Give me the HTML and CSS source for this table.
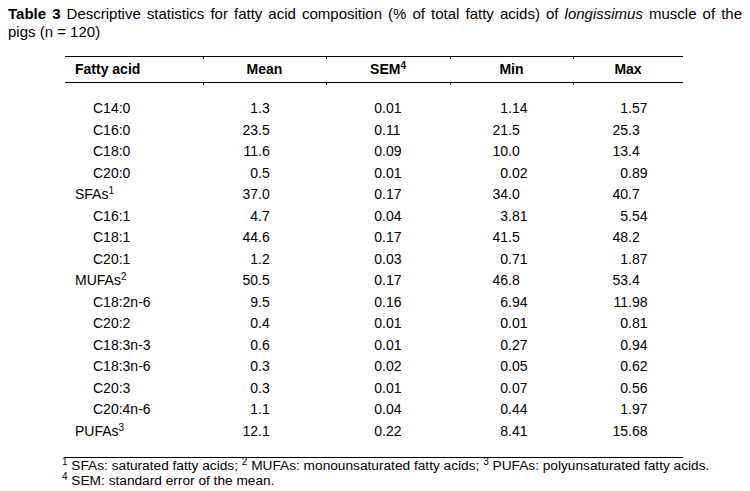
FILE: index.html
```html
<!DOCTYPE html>
<html lang="en">
<head>
<meta charset="utf-8">
<title>Table 3</title>
<link rel="stylesheet" href="styles.css">
</head>
<body>
<div class="caption">
  <span class="cap-line cap-full"><b>Table 3</b> Descriptive statistics for fatty acid composition (% of total fatty acids) of <i>longissimus</i> muscle of the</span>
  <span class="cap-line">pigs (n = 120)</span>
</div>
<table class="stats">
  <colgroup>
    <col class="c-name"><col class="c-mean"><col class="c-sem"><col class="c-min"><col class="c-max">
  </colgroup>
  <thead>
    <tr>
      <th class="h-name">Fatty acid</th>
      <th class="h-col">Mean</th>
      <th class="h-col">SEM<sup>4</sup></th>
      <th class="h-col">Min</th>
      <th class="h-col">Max</th>
    </tr>
  </thead>
  <tbody>
    <tr class="first">
      <td class="sub">C14:0</td><td class="mean"><span class="i">1</span>.3</td><td class="sem"><span class="i">0</span>.01</td><td class="min"><span class="i">1</span>.14</td><td class="max"><span class="i">1</span>.57</td>
    </tr>
    <tr>
      <td class="sub">C16:0</td><td class="mean"><span class="i">23</span>.5</td><td class="sem"><span class="i">0</span>.11</td><td class="min"><span class="i">21</span>.5</td><td class="max"><span class="i">25</span>.3</td>
    </tr>
    <tr>
      <td class="sub">C18:0</td><td class="mean"><span class="i">11</span>.6</td><td class="sem"><span class="i">0</span>.09</td><td class="min"><span class="i">10</span>.0</td><td class="max"><span class="i">13</span>.4</td>
    </tr>
    <tr>
      <td class="sub">C20:0</td><td class="mean"><span class="i">0</span>.5</td><td class="sem"><span class="i">0</span>.01</td><td class="min"><span class="i">0</span>.02</td><td class="max"><span class="i">0</span>.89</td>
    </tr>
    <tr>
      <td class="grp">SFAs<sup>1</sup></td><td class="mean"><span class="i">37</span>.0</td><td class="sem"><span class="i">0</span>.17</td><td class="min"><span class="i">34</span>.0</td><td class="max"><span class="i">40</span>.7</td>
    </tr>
    <tr>
      <td class="sub">C16:1</td><td class="mean"><span class="i">4</span>.7</td><td class="sem"><span class="i">0</span>.04</td><td class="min"><span class="i">3</span>.81</td><td class="max"><span class="i">5</span>.54</td>
    </tr>
    <tr>
      <td class="sub">C18:1</td><td class="mean"><span class="i">44</span>.6</td><td class="sem"><span class="i">0</span>.17</td><td class="min"><span class="i">41</span>.5</td><td class="max"><span class="i">48</span>.2</td>
    </tr>
    <tr>
      <td class="sub">C20:1</td><td class="mean"><span class="i">1</span>.2</td><td class="sem"><span class="i">0</span>.03</td><td class="min"><span class="i">0</span>.71</td><td class="max"><span class="i">1</span>.87</td>
    </tr>
    <tr>
      <td class="grp">MUFAs<sup>2</sup></td><td class="mean"><span class="i">50</span>.5</td><td class="sem"><span class="i">0</span>.17</td><td class="min"><span class="i">46</span>.8</td><td class="max"><span class="i">53</span>.4</td>
    </tr>
    <tr>
      <td class="sub">C18:2n-6</td><td class="mean"><span class="i">9</span>.5</td><td class="sem"><span class="i">0</span>.16</td><td class="min"><span class="i">6</span>.94</td><td class="max"><span class="i">11</span>.98</td>
    </tr>
    <tr>
      <td class="sub">C20:2</td><td class="mean"><span class="i">0</span>.4</td><td class="sem"><span class="i">0</span>.01</td><td class="min"><span class="i">0</span>.01</td><td class="max"><span class="i">0</span>.81</td>
    </tr>
    <tr>
      <td class="sub">C18:3n-3</td><td class="mean"><span class="i">0</span>.6</td><td class="sem"><span class="i">0</span>.01</td><td class="min"><span class="i">0</span>.27</td><td class="max"><span class="i">0</span>.94</td>
    </tr>
    <tr>
      <td class="sub">C18:3n-6</td><td class="mean"><span class="i">0</span>.3</td><td class="sem"><span class="i">0</span>.02</td><td class="min"><span class="i">0</span>.05</td><td class="max"><span class="i">0</span>.62</td>
    </tr>
    <tr>
      <td class="sub">C20:3</td><td class="mean"><span class="i">0</span>.3</td><td class="sem"><span class="i">0</span>.01</td><td class="min"><span class="i">0</span>.07</td><td class="max"><span class="i">0</span>.56</td>
    </tr>
    <tr>
      <td class="sub">C20:4n-6</td><td class="mean"><span class="i">1</span>.1</td><td class="sem"><span class="i">0</span>.04</td><td class="min"><span class="i">0</span>.44</td><td class="max"><span class="i">1</span>.97</td>
    </tr>
    <tr class="last">
      <td class="grp">PUFAs<sup>3</sup></td><td class="mean"><span class="i">12</span>.1</td><td class="sem"><span class="i">0</span>.22</td><td class="min"><span class="i">8</span>.41</td><td class="max"><span class="i">15</span>.68</td>
    </tr>
  </tbody>
</table>
<div class="notes">
  <div class="note"><sup>1</sup> SFAs: saturated fatty acids; <sup>2</sup> MUFAs: monounsaturated fatty acids; <sup>3</sup> PUFAs: polyunsaturated fatty acids.</div>
  <div class="note"><sup>4</sup> SEM: standard error of the mean.</div>
</div>
</body>
</html>
```

FILE: styles.css
```css
html, body {
  background: #ffffff;
}

body {
  margin: 0;
  padding: 5px 8px 0;
  font-family: "Liberation Sans", Arial, Helvetica, sans-serif;
  color: #000;
}

.caption {
  width: 734px;
  font-size: 15px;
  line-height: 18px;
}

.cap-line {
  display: block;
  white-space: nowrap;
}

.cap-full {
  white-space: normal;
  text-align: justify;
  text-align-last: justify;
}

.stats {
  margin: 15px 0 0 57px;
  border-collapse: collapse;
  table-layout: fixed;
  width: 618px;
  font-size: 14px;
}

.c-name { width: 138px; }
.c-mean { width: 123px; }
.c-sem { width: 124px; }
.c-min { width: 123px; }
.c-max { width: 110px; }

.stats th {
  border-top: 1px solid #000;
  border-bottom: 1px solid #000;
  padding: 4px 0 5px;
  line-height: 16px;
  font-weight: bold;
}

.h-name {
  text-align: left;
  padding-left: 10px !important;
}

.h-col {
  text-align: center;
  background:
    linear-gradient(#222, #222) 0 0 / 1px 2px no-repeat;
}

.stats sup {
  font-size: 10px;
  line-height: 0;
  vertical-align: 5px;
}

.stats td {
  padding: 0;
  line-height: 21.5px;
  white-space: nowrap;
}

.stats .first td {
  padding-top: 15px;
}

.stats .first td + td {
  background:
    linear-gradient(#222, #222) 0 0 / 1px 2px no-repeat;
}

.stats .last td {
  padding-bottom: 15px;
  border-bottom: 1px solid #000;
}

.grp { padding-left: 10px !important; }
.sub { padding-left: 28px !important; }

.i {
  display: inline-block;
  width: 20px;
  text-align: right;
}

.mean { padding-left: 35px !important; }
.sem { padding-left: 36px !important; }
.min { padding-left: 38px !important; }
.max { padding-left: 35px !important; }

.notes {
  margin-left: 54px;
  font-size: 13.7px;
  line-height: 15px;
}

.note {
  white-space: nowrap;
}

.note sup {
  font-size: 10px;
  line-height: 0;
  vertical-align: 5px;
}
```
